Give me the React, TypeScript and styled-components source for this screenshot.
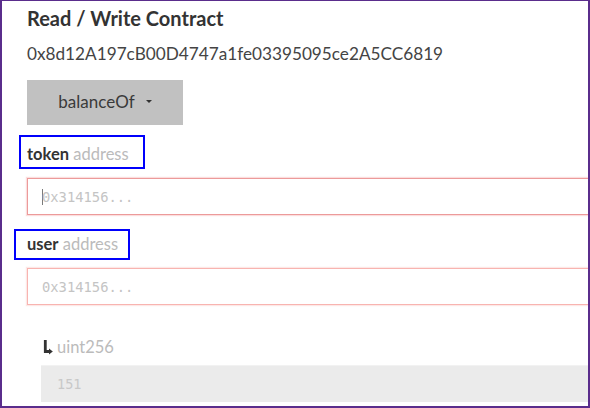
import React from 'react'
import styled, { createGlobalStyle } from 'styled-components'

const GlobalStyle = createGlobalStyle`
  html, body {
    margin: 0;
    padding: 0;
    background: #ffffff;
  }
  body {
    font-family: 'Lato', 'Liberation Sans', sans-serif;
  }
`

const Frame = styled.div`
  box-sizing: border-box;
  width: 590px;
  height: 408px;
  border-style: solid;
  border-color: #5a2d8c;
  border-width: 1px 2px 2px 2px;
  overflow: hidden;
  padding: 5px 0 0 25px;
  background: #ffffff;
`

const Title = styled.h2`
  margin: 0;
  font-size: 20px;
  line-height: 24px;
  font-weight: 700;
  color: #333333;
`

const Address = styled.div`
  margin-top: 14px;
  font-size: 17.2px;
  line-height: 20px;
  color: #444444;
`

const MethodButton = styled.button`
  margin-top: 16px;
  width: 156px;
  height: 45px;
  border: none;
  background: #c1c1c1;
  display: flex;
  align-items: center;
  justify-content: center;
  gap: 11px;
  font-family: 'Lato', 'Liberation Sans', sans-serif;
  font-size: 17px;
  color: #3a3a3a;
  padding: 0 0 2px 0;
`

const Caret = styled.span`
  width: 0;
  height: 0;
  border-left: 3px solid transparent;
  border-right: 3px solid transparent;
  border-top: 3px solid #333333;
`

const Label = styled.div<{ $pl: number; $pr: number; $pt: number; $pb: number; $mt: number }>`
  display: inline-block;
  margin-top: ${({ $mt }) => $mt}px;
  margin-left: ${({ $pl }) => -($pl + 2)}px;
  padding: ${({ $pt, $pr, $pb, $pl }) => `${$pt}px ${$pr}px ${$pb}px ${$pl}px`};
  border: 2px solid #0000fc;
  font-size: 16.5px;
  line-height: 20px;
`

const Name = styled.span`
  font-weight: 700;
  color: #333333;
`

const TypeName = styled.span`
  color: #bbbbbb;
`

const InputBox = styled.div<{ $focused?: boolean; $mt: number }>`
  box-sizing: border-box;
  margin-top: ${({ $mt }) => $mt}px;
  width: 600px;
  height: 37px;
  border: 1px solid ${({ $focused }) => ($focused ? '#ec9a9a' : '#f8b4b0')};
  box-shadow: 0 0 1px 1px ${({ $focused }) => ($focused ? 'rgba(248, 190, 190, 0.5)' : 'rgba(252, 210, 208, 0.5)')};
  display: flex;
  align-items: center;
  padding-left: 14px;
  font-family: 'DejaVu Sans Mono', 'Liberation Mono', monospace;
  font-size: 13.8px;
  color: #c4c4c4;
`

const TextCaret = styled.span`
  width: 1px;
  height: 16px;
  background: #7a7a7a;
  margin-right: -1px;
`

const OutputRow = styled.div`
  margin-top: 33px;
  margin-left: 16px;
  display: flex;
  align-items: center;
  gap: 4px;
  font-size: 16.5px;
  line-height: 19px;
  color: #bbbbbb;
`

const OutputBox = styled.div`
  box-sizing: border-box;
  margin-top: 8px;
  margin-left: 14px;
  width: 560px;
  height: 37px;
  background: #ebebeb;
  border-top: 1px solid #f2f2f2;
  display: flex;
  align-items: center;
  padding-left: 16px;
  font-family: 'DejaVu Sans Mono', 'Liberation Mono', monospace;
  font-size: 13.5px;
  color: #c8c8c8;
`

const ReturnArrow = () => (
  <svg width="10" height="15" viewBox="0 0 10 15">
    <path d="M2.3 0 V11.5 H6.5" stroke="#333" strokeWidth="2.8" fill="none" />
    <path d="M6 8.5 L9.8 11.5 L6 14.5 Z" fill="#333" />
  </svg>
)

export default function App() {
  return (
    <>
      <GlobalStyle />
      <Frame>
        <Title>Read / Write Contract</Title>
        <Address>0x8d12A197cB00D4747a1fe03395095ce2A5CC6819</Address>
        <MethodButton>
          balanceOf
          <Caret />
        </MethodButton>
        <div>
          <Label $mt={10} $pl={6} $pr={14} $pt={7} $pb={3}>
            <Name>token</Name> <TypeName>address</TypeName>
          </Label>
        </div>
        <InputBox $focused $mt={9}>
          <TextCaret />
          0x314156...
        </InputBox>
        <div>
          <Label $mt={14} $pl={11} $pr={10} $pt={3} $pb={4}>
            <Name>user</Name> <TypeName>address</TypeName>
          </Label>
        </div>
        <InputBox $mt={8}>0x314156...</InputBox>
        <OutputRow>
          <ReturnArrow />
          uint256
        </OutputRow>
        <OutputBox>151</OutputBox>
      </Frame>
    </>
  )
}
